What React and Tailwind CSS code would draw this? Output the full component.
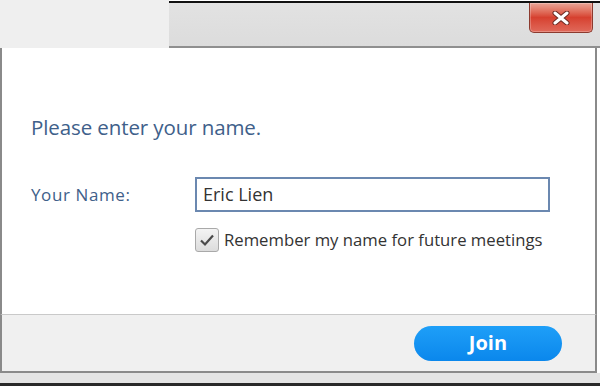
import React from 'react';

const CloseButton = () => (
  <div className="w-[64px] h-[30px] rounded-b-[5px] border border-t-0 border-[#8c3a2e] bg-gradient-to-b from-[#e9a597] via-[#d6402f] to-[#e0695a] flex items-center justify-center shadow-[inset_0_0_0_1px_rgba(255,255,255,0.25)]">
    <svg width="18" height="14" viewBox="0 0 18 14">
      <path d="M3 2 L15 12 M15 2 L3 12" stroke="#6b2a22" strokeWidth="5" strokeLinecap="round" />
      <path d="M3 2 L15 12 M15 2 L3 12" stroke="#ffffff" strokeWidth="3" strokeLinecap="round" />
    </svg>
  </div>
);

export default function App() {
  return (
    <div className="w-[600px] h-[386px] bg-white overflow-hidden flex flex-col font-['Open_Sans',sans-serif]">
      {/* Title bar */}
      <div className="flex h-[48px] shrink-0">
        <div className="w-[169px] bg-[#efefef]" />
        <div className="flex-1 mt-[1px] border-t-2 border-[#111] border-b-2 border-b-[#8f8f8f] bg-gradient-to-b from-[#e2e2e2] to-[#dcdcdc] flex justify-end pr-[7px]">
          <CloseButton />
        </div>
      </div>

      {/* Body */}
      <div className="h-[266px] shrink-0 mr-[3px] border-x-2 border-[#8a8a8a] bg-white pl-[29px] pr-[45px] pt-[66px]">
        <div className="text-[20.5px] leading-[26px] tracking-[-0.1px] text-[#40608a]">Please enter your name.</div>
        <div className="mt-[37px] flex items-center">
          <div className="w-[164px] text-[17px] tracking-[0.6px] text-[#40608a]">Your Name:</div>
          <div className="flex-1 h-[35px] border-2 border-[#6b88b0] flex items-center pl-[6px] text-[18px] text-[#333]">
            Eric Lien
          </div>
        </div>
        <div className="mt-[15px] ml-[164px] flex items-center gap-[5px]">
          <div className="w-[24px] h-[24px] rounded-[3px] border border-[#a9a9a9] bg-gradient-to-b from-[#f4f4f4] to-[#dcdcdc] flex items-center justify-center">
            <svg width="16" height="14" viewBox="0 0 16 14">
              <path d="M2 7.5 L6 11.5 L14 2.5" fill="none" stroke="#4a4a4a" strokeWidth="2.2" />
            </svg>
          </div>
          <div className="text-[16.7px] text-[#333]">Remember my name for future meetings</div>
        </div>
      </div>

      {/* Footer */}
      <div className="h-[59px] shrink-0 mr-[3px] border-x-2 border-b-2 border-[#8a8a8a] border-t border-t-[#c9c9c9] bg-[#f0f0f0] flex items-center justify-end pr-[33px]">
        <div className="w-[148px] h-[35px] rounded-full bg-gradient-to-b from-[#1e9ff8] to-[#0a87ec] flex items-center justify-center text-white font-bold text-[20px]">
          Join
        </div>
      </div>

      {/* Bottom edge */}
      <div className="flex-1 bg-[#e4e4e4] flex flex-col justify-end">
        <div className="h-[3px] bg-[#2a2a2a]" />
      </div>
    </div>
  );
}
